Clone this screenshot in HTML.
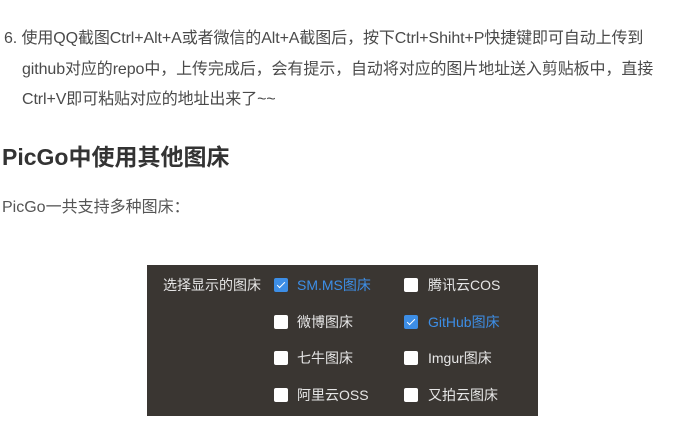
<!DOCTYPE html>
<html><head><meta charset="utf-8"><style>
body{margin:0;width:698px;height:423px;background:#fff;font-family:"Liberation Sans","Noto Sans CJK SC",sans-serif;color:#444;position:relative;overflow:hidden}
.t{position:absolute;white-space:nowrap}
.p{font-size:16px;color:#4a4a4a;letter-spacing:-0.1px}
.panel{position:absolute;left:147px;top:265px;width:391px;height:151px;background:#3a3632}
.cb{position:absolute;width:14px;height:14px;background:#fff;border-radius:2px}
.cb.on{background:#3d8ee6}
.cb.on:after{content:"";position:absolute;left:4.5px;top:1.5px;width:3px;height:7px;border:solid #fff;border-width:0 1.5px 1.5px 0;transform:rotate(45deg)}
.l{position:absolute;font-size:14px;color:#e6e6e6;white-space:nowrap;line-height:16px}
.l.on{color:#3d8ee6}
</style></head><body>
<div class="t p" style="left:4px;top:24px">6. 使用QQ截图Ctrl+Alt+A或者微信的Alt+A截图后，按下Ctrl+Shiht+P快捷键即可自动上传到</div>
<div class="t p" style="left:22px;top:55px">github对应的repo中，上传完成后，会有提示，自动将对应的图片地址送入剪贴板中，直接</div>
<div class="t p" style="left:22px;top:85px">Ctrl+V即可粘贴对应的地址出来了~~</div>
<div class="t" style="left:2px;top:138px;font-size:23px;font-weight:bold;color:#333">PicGo中使用其他图床</div>
<div class="t" style="left:2px;top:193px;font-size:16px;color:#555">PicGo一共支持多种图床：</div>
<div class="panel">
<div class="l" style="left:16px;top:12px">选择显示的图床</div>
<div class="cb on" style="left:127px;top:13px"></div><div class="l on" style="left:150px;top:12px">SM.MS图床</div>
<div class="cb" style="left:257px;top:13px"></div><div class="l" style="left:281px;top:12px">腾讯云COS</div>
<div class="cb" style="left:127px;top:50px"></div><div class="l" style="left:150px;top:49px">微博图床</div>
<div class="cb on" style="left:257px;top:50px"></div><div class="l on" style="left:281px;top:49px">GitHub图床</div>
<div class="cb" style="left:127px;top:86px"></div><div class="l" style="left:150px;top:85px">七牛图床</div>
<div class="cb" style="left:257px;top:86px"></div><div class="l" style="left:281px;top:85px">Imgur图床</div>
<div class="cb" style="left:127px;top:123px"></div><div class="l" style="left:150px;top:122px">阿里云OSS</div>
<div class="cb" style="left:257px;top:123px"></div><div class="l" style="left:281px;top:122px">又拍云图床</div>
</div>
</body></html>
